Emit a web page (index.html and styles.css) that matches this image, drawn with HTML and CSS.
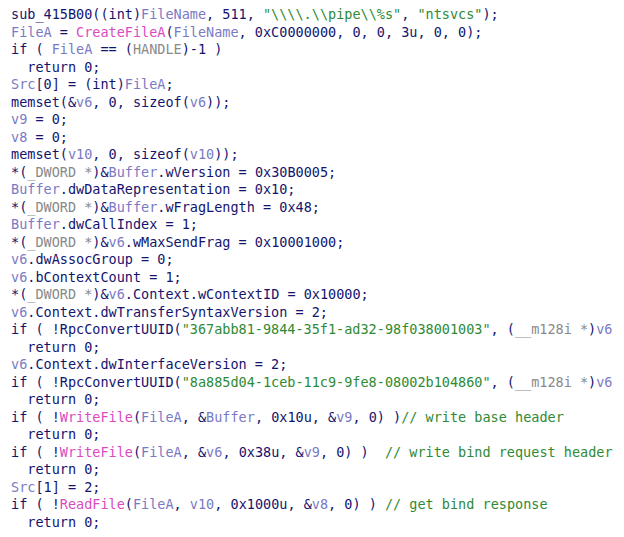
FILE: index.html
```html
<!DOCTYPE html>
<html>
<head>
<meta charset="utf-8">
<link rel="stylesheet" href="styles.css">
</head>
<body>
<div class="code">
<div class="ln">sub_415B00((int)<span class="v">FileName</span>, 511, <span class="s">"\\\\.\\pipe\\%s"</span>, <span class="s">"ntsvcs"</span>);</div>
<div class="ln"><span class="v">FileA</span> = <span class="f">CreateFileA</span>(<span class="v">FileName</span>, 0xC0000000, 0, 0, 3u, 0, 0);</div>
<div class="ln">if ( <span class="v">FileA</span> == (<span class="t">HANDLE</span>)-1 )</div>
<div class="ln">  return 0;</div>
<div class="ln"><span class="v">Src</span>[0] = (int)<span class="v">FileA</span>;</div>
<div class="ln">memset(&amp;<span class="v">v6</span>, 0, sizeof(<span class="v">v6</span>));</div>
<div class="ln"><span class="v">v9</span> = 0;</div>
<div class="ln"><span class="v">v8</span> = 0;</div>
<div class="ln">memset(<span class="v">v10</span>, 0, sizeof(<span class="v">v10</span>));</div>
<div class="ln">*(<span class="t">_DWORD *</span>)&amp;<span class="v">Buffer</span>.wVersion = 0x30B0005;</div>
<div class="ln"><span class="v">Buffer</span>.dwDataRepresentation = 0x10;</div>
<div class="ln">*(<span class="t">_DWORD *</span>)&amp;<span class="v">Buffer</span>.wFragLength = 0x48;</div>
<div class="ln"><span class="v">Buffer</span>.dwCallIndex = 1;</div>
<div class="ln">*(<span class="t">_DWORD *</span>)&amp;<span class="v">v6</span>.wMaxSendFrag = 0x10001000;</div>
<div class="ln"><span class="v">v6</span>.dwAssocGroup = 0;</div>
<div class="ln"><span class="v">v6</span>.bContextCount = 1;</div>
<div class="ln">*(<span class="t">_DWORD *</span>)&amp;<span class="v">v6</span>.Context.wContextID = 0x10000;</div>
<div class="ln"><span class="v">v6</span>.Context.dwTransferSyntaxVersion = 2;</div>
<div class="ln">if ( !RpcConvertUUID(<span class="s">"367abb81-9844-35f1-ad32-98f038001003"</span>, (<span class="t">__m128i *</span>)<span class="v">v6</span></div>
<div class="ln">  return 0;</div>
<div class="ln"><span class="v">v6</span>.Context.dwInterfaceVersion = 2;</div>
<div class="ln">if ( !RpcConvertUUID(<span class="s">"8a885d04-1ceb-11c9-9fe8-08002b104860"</span>, (<span class="t">__m128i *</span>)<span class="v">v6</span></div>
<div class="ln">  return 0;</div>
<div class="ln">if ( !<span class="f">WriteFile</span>(<span class="v">FileA</span>, &amp;<span class="v">Buffer</span>, 0x10u, &amp;<span class="v">v9</span>, 0) )<span class="s">// write base header</span></div>
<div class="ln">  return 0;</div>
<div class="ln">if ( !<span class="f">WriteFile</span>(<span class="v">FileA</span>, &amp;<span class="v">v6</span>, 0x38u, &amp;<span class="v">v9</span>, 0) )  <span class="s">// write bind request header</span></div>
<div class="ln">  return 0;</div>
<div class="ln"><span class="v">Src</span>[1] = 2;</div>
<div class="ln">if ( !<span class="f">ReadFile</span>(<span class="v">FileA</span>, <span class="v">v10</span>, 0x1000u, &amp;<span class="v">v8</span>, 0) ) <span class="s">// get bind response</span></div>
<div class="ln">  return 0;</div>
</div>
</body>
</html>
```
FILE: styles.css
```css
html, body {
  margin: 0;
  padding: 0;
  background: #ffffff;
}
.code {
  display: flex;
  flex-direction: column;
  padding: 6px 0 0 11px;
  font-family: "DejaVu Sans Mono", monospace;
  font-size: 13.5px;
  color: #14146e;
  overflow: hidden;
}
.ln {
  height: 17.5px;
  line-height: 17.5px;
  white-space: pre;
}
.v { color: #7a7ac4; }
.f { color: #d94cc0; }
.s { color: #2f8a35; }
.t { color: #8a8a8a; }
```
